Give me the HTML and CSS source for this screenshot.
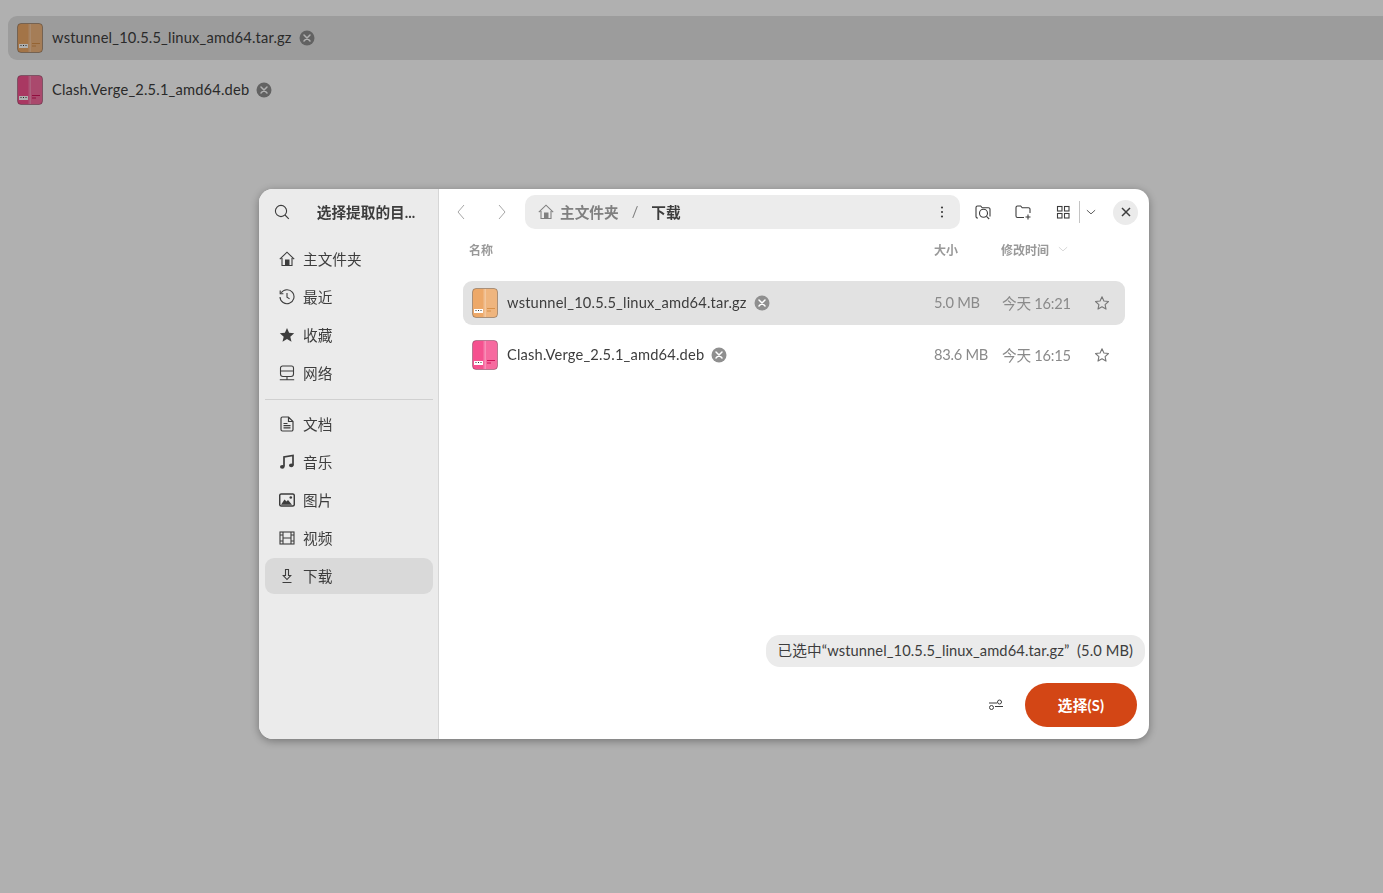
FILE: index.html
```html
<!DOCTYPE html>
<html lang="zh-CN">
<head>
    <meta charset="UTF-8">
    <title>选择提取的目录</title>
    <link rel="stylesheet" href="styles.css">
</head>
<body>
    <svg class="defs" width="0" height="0">
        <symbol id="archive" viewBox="0 0 26 30">
            <rect x="0.5" y="0.5" width="25" height="29" rx="3.5" fill="currentColor" stroke="#00000045"/>
            <path d="M13 1h9.500A2.500 2.500 0 0 1 25 3.500v23a2.500 2.500 0 0 1-2.500 2.500H13z" fill="#ffffff" fill-opacity=".15"/>
            <rect x="11.500" y="1" width="2.500" height="28" fill="#ffffff" fill-opacity=".25"/>
            <rect x="2" y="21" width="9" height="4" fill="#ffffff"/>
            <path d="M3.500 22.500h1M6 22.500h1M8.500 22.500h1" stroke="#333" stroke-width="1.200"/>
            <path class="mark" d="M15 20.500h8M15 23h4" stroke-width="1"/>
        </symbol>
        <symbol id="clear" viewBox="0 0 16 16">
            <circle cx="8" cy="8" r="7.500" fill="#8f8f8f"/>
            <path d="M5 5l6 6M11 5l-6 6" stroke="#fff" stroke-width="1.500" stroke-linecap="round"/>
        </symbol>
        <symbol id="star" viewBox="0 0 16 16">
            <path d="M8 1.800l1.900 4.200 4.600.5-3.400 3.100.9 4.500-4-2.300-4 2.300.9-4.500-3.400-3.100 4.600-.5z" fill="none" stroke="currentColor" stroke-width="1.100" stroke-linejoin="round"/>
        </symbol>
        <symbol id="home" viewBox="0 0 16 16">
            <path d="M.8 8.200L8 1.200l7.200 7M3 7v7.500h10V7" fill="none" stroke="currentColor" stroke-width="1.100"/>
            <rect x="6" y="8.500" width="4.500" height="6" fill="currentColor"/>
        </symbol>
    </svg>

    <!-- window behind the dialog -->
    <div class="back-list">
        <div class="back-row selected">
            <svg class="file-icon tan"><use href="#archive"/></svg>
            <span class="name">wstunnel_10.5.5_linux_amd64.tar.gz</span>
            <svg class="clear-icon"><use href="#clear"/></svg>
        </div>
        <div class="back-row">
            <svg class="file-icon pink"><use href="#archive"/></svg>
            <span class="name">Clash.Verge_2.5.1_amd64.deb</span>
            <svg class="clear-icon"><use href="#clear"/></svg>
        </div>
    </div>
    <div class="scrim"></div>

    <div class="dialog">
        <aside class="sidebar">
            <div class="side-head">
                <svg class="icon" viewBox="0 0 16 16"><circle cx="7" cy="7" r="5.600" fill="none" stroke="currentColor" stroke-width="1.100"/><path d="M11 11l3.800 3.800" stroke="currentColor" stroke-width="1.100"/></svg>
                <div class="side-title">选择提取的目...</div>
            </div>
            <div class="places">
                <div class="place">
                    <svg class="icon"><use href="#home"/></svg>主文件夹
                </div>
                <div class="place">
                    <svg class="icon" viewBox="0 0 16 16"><path d="M2.200 3.800A7 7 0 1 1 1 8" fill="none" stroke="currentColor" stroke-width="1.100"/><path d="M1.200 1.500v3.200h3.200" fill="none" stroke="currentColor" stroke-width="1.100"/><path d="M8 4v4.300l2.600 1.600" fill="none" stroke="currentColor" stroke-width="1.100"/></svg>最近
                </div>
                <div class="place">
                    <svg class="icon" viewBox="0 0 16 16"><path d="M8 1l2.100 4.800 5.100.5-3.900 3.400 1.200 5.100L8 11.900l-4.500 2.900 1.200-5.100L.8 6.300l5.100-.5z" fill="currentColor"/></svg>收藏
                </div>
                <div class="place">
                    <svg class="icon" viewBox="0 0 16 16"><path d="M3.500 1h9A2 2 0 0 1 14.500 3v6a2.500 2.500 0 0 1-2.500 2.500H4A2.500 2.500 0 0 1 1.500 9V3a2 2 0 0 1 2-2zM1.500 6h13M.8 14.700h14.400M8 11.500v3" fill="none" stroke="currentColor" stroke-width="1.100"/></svg>网络
                </div>
                <div class="side-sep"></div>
                <div class="place">
                    <svg class="icon" viewBox="0 0 16 16"><path d="M3.500 1h6L14 5.500v8a1.500 1.500 0 0 1-1.500 1.500h-9A1.500 1.500 0 0 1 2 13.500v-11A1.500 1.500 0 0 1 3.500 1zM9.500 1v4.500H14M4.500 7.500h4M4.500 9.700h7M4.500 11.900h7" fill="none" stroke="currentColor" stroke-width="1.200"/></svg>文档
                </div>
                <div class="place">
                    <svg class="icon" viewBox="0 0 16 16"><path d="M5 12.500V3l9-1.500V11" fill="none" stroke="currentColor" stroke-width="1.700"/><ellipse cx="3.300" cy="12.800" rx="2.300" ry="1.900" fill="currentColor"/><ellipse cx="12.300" cy="11.300" rx="2.300" ry="1.900" fill="currentColor"/></svg>音乐
                </div>
                <div class="place">
                    <svg class="icon" viewBox="0 0 16 16"><rect x=".7" y="2" width="14.600" height="12" rx="1.500" fill="none" stroke="currentColor" stroke-width="1.500"/><path d="M2 12.800l3.500-5.300 2 2 1.500-1.500 4 4.800z" fill="currentColor"/><circle cx="11.800" cy="5.500" r="1.300" fill="currentColor"/></svg>图片
                </div>
                <div class="place">
                    <svg class="icon" viewBox="0 0 16 16"><rect x="1" y="2" width="14" height="12" fill="none" stroke="currentColor" stroke-width="1.100"/><path d="M4 2v12M12 2v12M4 8h8" fill="none" stroke="currentColor" stroke-width="1.100"/><path d="M1 5h3M1 11h3M12 5h3M12 11h3" stroke="currentColor" stroke-width="1"/></svg>视频
                </div>
                <div class="place active">
                    <svg class="icon" viewBox="0 0 16 16"><path d="M6.500 1.500h3v6h2.200L8 11.500 4.300 7.500h2.200zM3.500 14.500h9" fill="none" stroke="currentColor" stroke-width="1.100"/></svg>下载
                </div>
            </div>
        </aside>

        <main class="content">
            <div class="toolbar">
                <div class="nav-btns">
                    <svg class="chev" viewBox="0 0 10 16"><path d="M8 1L2 8l6 7" fill="none" stroke="currentColor" stroke-width="1"/></svg>
                    <svg class="chev" viewBox="0 0 10 16"><path d="M2 1l6 7-6 7" fill="none" stroke="currentColor" stroke-width="1"/></svg>
                </div>
                <div class="pathbar">
                    <svg class="icon"><use href="#home"/></svg>
                    <span class="crumb">主文件夹</span>
                    <span class="slash">/</span>
                    <span class="crumb current">下载</span>
                    <svg class="icon menu-dots" viewBox="0 0 16 16"><circle cx="8" cy="3.500" r="1.100" fill="currentColor"/><circle cx="8" cy="8" r="1.100" fill="currentColor"/><circle cx="8" cy="12.500" r="1.100" fill="currentColor"/></svg>
                </div>
                <div class="tools">
                    <svg class="icon" viewBox="0 0 16 16"><path d="M3 14H2.500A1.500 1.500 0 0 1 1 12.500v-9A1.500 1.500 0 0 1 2.500 2h3.200l1.500 1.800h6.300A1.500 1.500 0 0 1 15 5.300v7.200" fill="none" stroke="currentColor" stroke-width="1.100"/><circle cx="8.500" cy="9.300" r="4" fill="none" stroke="currentColor" stroke-width="1.100"/><path d="M11.500 12.300l2.700 2.700" stroke="currentColor" stroke-width="1.100"/></svg>
                    <svg class="icon" viewBox="0 0 16 16"><path d="M9 13.500H2.500A1.500 1.500 0 0 1 1 12V3.500A1.500 1.500 0 0 1 2.500 2h3.200l1.500 1.800h6.300A1.500 1.500 0 0 1 15 5.300V9" fill="none" stroke="currentColor" stroke-width="1.100"/><path d="M13 10.500v5M10.500 13h5" stroke="currentColor" stroke-width="1.100"/></svg>
                    <svg class="icon" viewBox="0 0 16 16"><rect x="2.500" y="2.500" width="4.500" height="4.500" fill="none" stroke="currentColor" stroke-width="1.100"/><rect x="9.500" y="2.500" width="4.500" height="4.500" fill="none" stroke="currentColor" stroke-width="1.100"/><rect x="2.500" y="9.500" width="4.500" height="4.500" fill="none" stroke="currentColor" stroke-width="1.100"/><rect x="9.500" y="9.500" width="4.500" height="4.500" fill="none" stroke="currentColor" stroke-width="1.100"/></svg>
                    <div class="tool-sep"></div>
                    <svg class="icon small-chev" viewBox="0 0 16 16"><path d="M2.500 5.500L8 10.500l5.500-5" fill="none" stroke="currentColor" stroke-width="1.100"/></svg>
                    <div class="close-btn">
                        <svg viewBox="0 0 16 16"><path d="M4 4l8 8M12 4l-8 8" stroke="currentColor" stroke-width="1.500"/></svg>
                    </div>
                </div>
            </div>

            <div class="col-head">
                <span>名称</span>
                <span>大小</span>
                <span class="col-date">修改时间
                    <svg viewBox="0 0 16 16"><path d="M2.500 5.500L8 10.500l5.500-5" fill="none" stroke="currentColor" stroke-width="1.100"/></svg>
                </span>
            </div>

            <div class="file-list">
                <div class="file-row selected">
                    <div class="file-name">
                        <svg class="file-icon tan"><use href="#archive"/></svg>
                        <span class="name">wstunnel_10.5.5_linux_amd64.tar.gz</span>
                        <svg class="clear-icon"><use href="#clear"/></svg>
                    </div>
                    <span class="file-meta">5.0 MB</span>
                    <span class="file-meta">今天 16:21</span>
                    <svg class="file-star"><use href="#star"/></svg>
                </div>
                <div class="file-row">
                    <div class="file-name">
                        <svg class="file-icon pink"><use href="#archive"/></svg>
                        <span class="name">Clash.Verge_2.5.1_amd64.deb</span>
                        <svg class="clear-icon"><use href="#clear"/></svg>
                    </div>
                    <span class="file-meta">83.6 MB</span>
                    <span class="file-meta">今天 16:15</span>
                    <svg class="file-star"><use href="#star"/></svg>
                </div>
            </div>

            <div class="status-wrap">
                <div class="status">已选中“wstunnel_10.5.5_linux_amd64.tar.gz”&nbsp; (5.0 MB)</div>
            </div>
            <div class="actions">
                <svg class="icon" viewBox="0 0 16 16"><circle cx="11.500" cy="5" r="2" fill="none" stroke="currentColor" stroke-width="1"/><circle cx="3.500" cy="10.500" r="2" fill="none" stroke="currentColor" stroke-width="1"/><path d="M1 6h8M7 9.500h8" stroke="currentColor" stroke-width="1"/></svg>
                <button class="select-btn">选择(S)</button>
            </div>
        </main>
    </div>
</body>
</html>
```

FILE: styles.css
```css
* {
    box-sizing: border-box;
    margin: 0;
    padding: 0;
}

html, body {
    height: 100%;
}

body {
    font-family: "Lato", "Noto Sans CJK SC", sans-serif;
    font-size: 14.67px;
    color: #3d3d3d;
    background: #fff;
    overflow: hidden;
}

.defs {
    position: absolute;
}

/* Window behind the dialog */
.back-list {
    padding: 16px 0 0 8px;
    display: flex;
    flex-direction: column;
    gap: 8px;
}

.back-row {
    height: 44px;
    padding-left: 9px;
    display: flex;
    align-items: center;
    gap: 9px;
    border-radius: 9px 0 0 9px;
}

.back-row.selected {
    background: #e2e2e2;
}

.scrim {
    position: fixed;
    inset: 0;
    background: rgba(0, 0, 0, 0.31);
}

/* Shared icons */
.icon {
    width: 16px;
    height: 16px;
    flex: none;
    color: #3d3d3d;
}

.file-icon {
    width: 26px;
    height: 30px;
    flex: none;
}

.file-icon.tan {
    color: #eda868;
    --mark: #d8914a;
}

.file-icon.pink {
    color: #f5518f;
    --mark: #d4145a;
}

.mark {
    stroke: var(--mark);
}

.clear-icon {
    width: 16px;
    height: 16px;
    flex: none;
    margin-left: -2px;
}

/* file names are a little wider than Lato sets them */
.name {
    letter-spacing: 0.18px;
    margin-bottom: 2px;
}

/* Dialog */
.dialog {
    position: fixed;
    left: 259px;
    top: 189px;
    width: 890px;
    height: 550px;
    display: flex;
    background: #fff;
    border-radius: 14px;
    overflow: hidden;
    box-shadow: 0 2px 10px rgba(0, 0, 0, 0.35);
}

.sidebar {
    width: 180px;
    flex: none;
    background: #ebebeb;
    border-right: 1px solid #d6d6d6;
    padding: 6px 5px 0 6px;
}

.side-head {
    height: 34px;
    display: flex;
    align-items: center;
    padding-left: 9px;
}

.side-title {
    flex: 1;
    text-align: center;
    font-weight: 700;
    padding: 0 3px 2px 12px;
}

.places {
    margin-top: 12px;
    display: flex;
    flex-direction: column;
    gap: 2px;
}

.place {
    height: 36px;
    padding: 0 0 2px 14px;
    display: flex;
    align-items: center;
    gap: 8px;
    border-radius: 9px;
}

.place .icon {
    margin-top: 2px;
}

.place.active {
    background: #d9d9d9;
}

.side-sep {
    height: 1px;
    background: #d0d0d0;
    margin: 6px 0 4px;
}

.content {
    flex: 1;
    min-width: 0;
    display: flex;
    flex-direction: column;
}

.toolbar {
    height: 34px;
    margin-top: 6px;
    display: flex;
    align-items: center;
}

.nav-btns {
    width: 86px;
    padding: 0 18px 0 17px;
    flex: none;
    display: flex;
    justify-content: space-between;
}

.chev {
    width: 10px;
    height: 16px;
    color: #a6a6a6;
}

.pathbar {
    width: 435px;
    height: 34px;
    flex: none;
    background: #ececec;
    border-radius: 10px;
    padding: 0 10px 0 13px;
    display: flex;
    align-items: center;
    color: #808080;
    font-weight: 700;
}

.pathbar .icon {
    color: #808080;
}

.crumb {
    margin-left: 6px;
    margin-bottom: 2px;
}

.slash {
    margin: 0 13px 2px;
    font-weight: 400;
}

.crumb.current {
    margin-left: 0;
    color: #3d3d3d;
}

.pathbar .menu-dots {
    margin-left: auto;
    color: #3d3d3d;
}

.tools {
    flex: 1;
    display: flex;
    align-items: center;
    padding-left: 15px;
    gap: 24px;
}

.tool-sep {
    width: 1px;
    height: 22px;
    background: #c4c4c4;
    margin-left: -16px;
    margin-right: -19px;
}

.tools .small-chev {
    width: 12px;
    height: 12px;
}

.close-btn {
    width: 25px;
    height: 25px;
    border-radius: 50%;
    background: #ebebeb;
    margin-left: -8px;
    display: flex;
    align-items: center;
    justify-content: center;
}

.close-btn svg {
    width: 16px;
    height: 16px;
}

.col-head {
    margin-top: 10px;
    height: 20px;
    padding-left: 30px;
    display: grid;
    grid-template-columns: 465px 67px 1fr;
    align-items: center;
    font-size: 12px;
    color: #999;
    font-weight: 700;
}

.col-date {
    display: flex;
    align-items: center;
    gap: 8px;
}

.col-date svg {
    width: 12px;
    height: 12px;
    color: #d0d0d0;
}

.file-list {
    margin: 22px 24px 0;
    display: flex;
    flex-direction: column;
    gap: 8px;
}

.file-row {
    height: 44px;
    padding: 0 15px 0 9px;
    display: grid;
    grid-template-columns: 462px 68px 1fr 16px;
    align-items: center;
    border-radius: 9px;
}

.file-row.selected {
    background: #e2e2e2;
}

.file-name {
    display: flex;
    align-items: center;
    gap: 9px;
}

.file-meta {
    color: #8a8a8a;
    letter-spacing: -0.25px;
    margin-bottom: 2px;
}

.file-star {
    width: 16px;
    height: 16px;
    color: #777;
}

.status-wrap {
    margin-top: auto;
    display: flex;
    justify-content: flex-end;
    padding-right: 4px;
}

.status {
    height: 32px;
    padding: 0 12px 3px 11px;
    display: flex;
    align-items: center;
    background: #ebebeb;
    border-radius: 14px;
    letter-spacing: 0.1px;
}

.actions {
    margin-top: 16px;
    margin-bottom: 12px;
    padding-right: 12px;
    display: flex;
    justify-content: flex-end;
    align-items: center;
    gap: 21px;
}

.select-btn {
    width: 112px;
    height: 44px;
    border: none;
    border-radius: 22px;
    background: #d34615;
    color: #fff;
    font-family: inherit;
    font-size: 14.67px;
    font-weight: 700;
    letter-spacing: 0.2px;
    padding-bottom: 2px;
}
```
